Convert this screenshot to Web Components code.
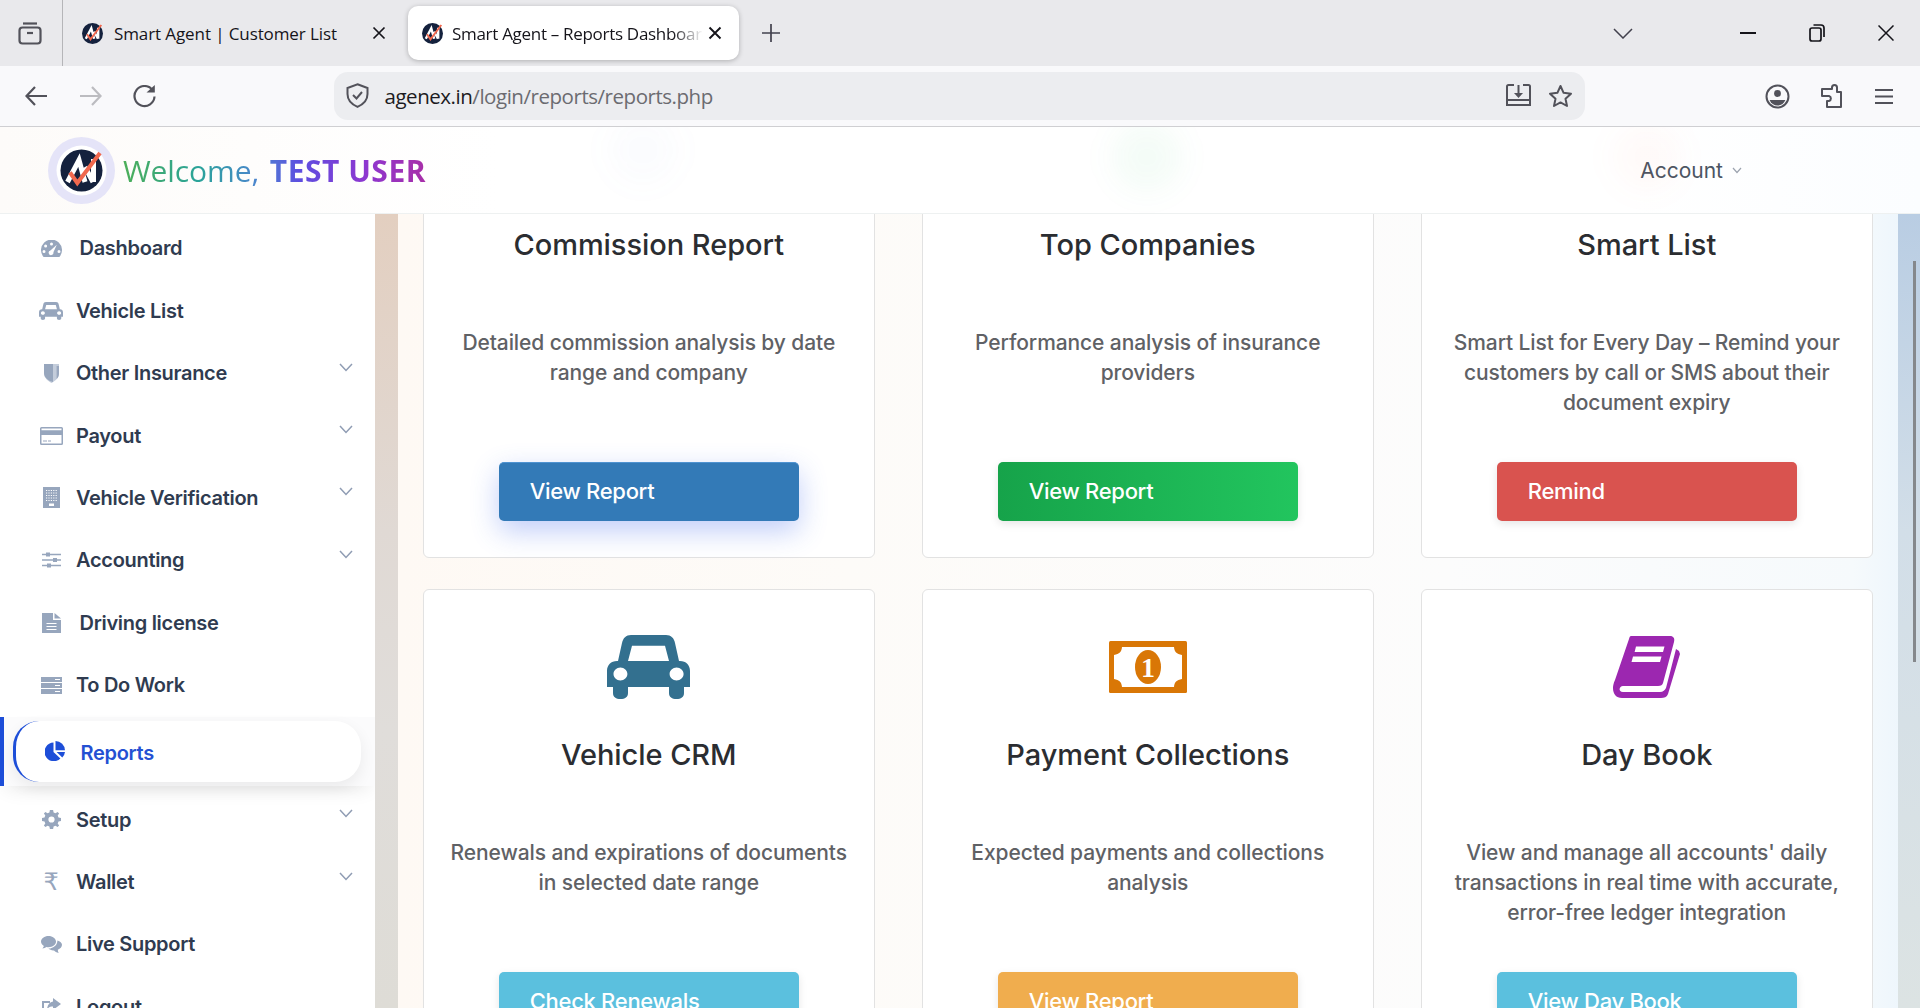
<!DOCTYPE html>
<html lang="en">
<head>
<meta charset="utf-8">
<title>Smart Agent – Reports Dashboard</title>
<style>
  html, body { margin: 0; height: 100%; overflow: hidden; background: #fff; }
  body { display: flex; flex-direction: column; font-family: Inter, "Liberation Sans", sans-serif; }
  .page { flex: 1; display: flex; min-height: 0; }
</style>
</head>
<body>
<browser-tabs></browser-tabs>
<browser-toolbar url-host="agenex.in" url-path="/login/reports/reports.php"></browser-toolbar>
<app-header>Welcome, <b>TEST USER</b></app-header>
<div class="page">
  <side-nav>
    <nav-item icon="gauge" indent>Dashboard</nav-item>
    <nav-item icon="car">Vehicle List</nav-item>
    <nav-item icon="shield" more>Other Insurance</nav-item>
    <nav-item icon="card" more>Payout</nav-item>
    <nav-item icon="building" more>Vehicle Verification</nav-item>
    <nav-item icon="sliders" more>Accounting</nav-item>
    <nav-item icon="file" indent>Driving license</nav-item>
    <nav-item icon="tasks">To Do Work</nav-item>
    <nav-item icon="pie" indent active>Reports</nav-item>
    <nav-item icon="cog" more>Setup</nav-item>
    <nav-item icon="rupee" more>Wallet</nav-item>
    <nav-item icon="chat">Live Support</nav-item>
    <nav-item icon="logout">Logout</nav-item>
  </side-nav>
  <reports-area>
    <report-card title="Commission Report" action="View Report" tone="primary">Detailed commission analysis by date<br>range and company</report-card>
    <report-card title="Top Companies" action="View Report" tone="success">Performance analysis of insurance<br>providers</report-card>
    <report-card title="Smart List" action="Remind" tone="danger">Smart List for Every Day – Remind your<br>customers by call or SMS about their<br>document expiry</report-card>
    <report-card title="Vehicle CRM" action="Check Renewals" tone="info" icon="crm">Renewals and expirations of documents<br>in selected date range</report-card>
    <report-card title="Payment Collections" action="View Report" tone="warning" icon="money">Expected payments and collections<br>analysis</report-card>
    <report-card title="Day Book" action="View Day Book" tone="info" icon="book">View and manage all accounts' daily<br>transactions in real time with accurate,<br>error-free ledger integration</report-card>
  </reports-area>
</div>

<script>
// car outline is used by the sidebar and by the big CRM card
const CAR_PATH = 'M24 0H59C64 0 67 3 68 8L72 26H73C79 26 83 30 83 36V52H77V58C77 62 74 64 69.5 64C65 64 62 62 62 58V52H21V58C21 62 18 64 13.5 64C9 64 6 62 6 58V52H0V36C0 30 4 26 10 26H11L15 8C16 3 19 0 24 0ZM25 10.7L21 26H62L58 10.7ZM13.4 32.5C9.5 32.5 6.5 35.5 6.5 39S9.5 45.5 13.4 45.5 20.4 42.5 20.4 39 17.3 32.5 13.4 32.5ZM69.6 32.5C65.7 32.5 62.6 35.5 62.6 39S65.7 45.5 69.6 45.5 76.6 42.5 76.6 39 73.5 32.5 69.6 32.5Z';

function logoMark(size, ring) {
  return `<svg width="${size}" height="${size}" viewBox="0 0 67 67">
    ${ring ? '<circle cx="33.5" cy="33.5" r="33.5" fill="#e5e4f8"/><circle cx="33.5" cy="33.5" r="25" fill="#fff"/>' : ''}
    <circle cx="33.5" cy="33.5" r="${ring ? 21 : 33.5}" fill="#14213d"/>
    <g transform="${ring ? '' : 'translate(-17.5 -18) scale(1.52)'}">
      <path d="M19.5 45L31 23L37 45M45.5 22V45M37 30L45 45" fill="none" stroke="#fff" stroke-width="5"/>
      <path d="M22 35.5L29.3 46L52 16" fill="none" stroke="#f0684e" stroke-width="4"/>
    </g>
  </svg>`;
}

const NAV_ICONS = {
  gauge: '<svg width="21" height="17" viewBox="0 0 21 17"><path fill-rule="evenodd" d="M2.6 17A10.5 10.5 0 1 1 18.4 17ZM10.5 2.4A1.5 1.5 0 1 0 10.5 5.4 1.5 1.5 0 0 0 10.5 2.4ZM4.6 4.6A1.5 1.5 0 1 0 4.6 7.6 1.5 1.5 0 0 0 4.6 4.6ZM3 10A1.5 1.5 0 1 0 3 13 1.5 1.5 0 0 0 3 10ZM18 10A1.5 1.5 0 1 0 18 13 1.5 1.5 0 0 0 18 10ZM15.8 4.8L9.4 10.4A2.4 2.4 0 1 0 12.4 12.2Z"/></svg>',
  car: `<svg width="24" height="18" viewBox="0 0 83 64" preserveAspectRatio="none"><path fill-rule="evenodd" d="${CAR_PATH}"/></svg>`,
  shield: '<svg width="15" height="19" viewBox="0 0 15 19"><path d="M0 0H15V9C15 14 11 17 7.5 19 4 17 0 14 0 9Z" fill="#c4cddb"/><path d="M0 0H9V18C5 17 0 14 0 9Z"/><path d="M12.6 2H15V9C15 12 14 14 12.6 15Z" fill="#9aa8bf"/></svg>',
  card: '<svg width="23" height="18" viewBox="0 0 23 18"><path fill-rule="evenodd" d="M1.5 0H21.5A1.5 1.5 0 0 1 23 1.5V16.5A1.5 1.5 0 0 1 21.5 18H1.5A1.5 1.5 0 0 1 0 16.5V1.5A1.5 1.5 0 0 1 1.5 0ZM1.5 8V16.5H21.5V8ZM1.5 1.5V3.2H21.5V1.5ZM3 13.5H7V14.5H3ZM8 13.5H11V14.5H8Z"/></svg>',
  building: `<svg width="17" height="21" viewBox="0 0 17 21"><path d="M0 0H17V21H0Z"/><path d="M3 3.5H14M3 6H14M3 8.5H14M3 11H14M3 13.5H14" stroke="#fff" stroke-width="1" stroke-dasharray="1.2 1.2"/><path d="M6 16.5H11V19H6Z" fill="#fff"/></svg>`,
  sliders: '<svg width="19" height="16" viewBox="0 0 19 16"><path d="M0 2.5H19M0 8H19M0 13.5H19" stroke-width="1.4" fill="none"/><path d="M4 0.5H8V4.5H4ZM11 6H15V10H11ZM5 11.5H9V15.5H5Z" stroke="none"/></svg>',
  file: '<svg width="19" height="20" viewBox="0 0 19 20"><path fill-rule="evenodd" d="M0 0H11V7H19V20H0ZM4.5 10V11H14.5V10ZM4.5 13V14H14.5V13ZM4.5 16V17H14.5V16Z"/><path d="M12.5 0L19 5.5H12.5Z"/></svg>',
  tasks: '<svg width="21" height="17" viewBox="0 0 21 17"><path fill-rule="evenodd" d="M0 0H21V5H0ZM0 6H21V11H0ZM0 12H21V17H0ZM14 2V3H19V2ZM14 8V9H19V8ZM14 14V15H19V14Z"/></svg>',
  pie: '<svg width="20" height="20" viewBox="0 0 20 20"><path d="M8.5 1.6V11L15.4 17.4A9.3 9.3 0 1 1 8.5 1.6Z"/><path d="M10.5 0A9.5 9.5 0 0 1 20 9.2H10.5Z"/><path d="M11.6 11H20A9.5 9.5 0 0 1 17.3 16.5Z"/></svg>',
  cog: '<svg width="19" height="19" viewBox="0 0 19 19"><path fill-rule="evenodd" d="M7.9 0H11.1L11.6 2.5 13.5 3.3 15.6 1.9 17.1 3.4 15.7 5.5 16.5 7.4 19 7.9V11.1L16.5 11.6 15.7 13.5 17.1 15.6 15.6 17.1 13.5 15.7 11.6 16.5 11.1 19H7.9L7.4 16.5 5.5 15.7 3.4 17.1 1.9 15.6 3.3 13.5 2.5 11.6 0 11.1V7.9L2.5 7.4 3.3 5.5 1.9 3.4 3.4 1.9 5.5 3.3 7.4 2.5ZM9.5 6.4A3.1 3.1 0 1 0 9.5 12.6 3.1 3.1 0 0 0 9.5 6.4Z"/></svg>',
  rupee: '<span class="glyph">₹</span>',
  chat: '<svg width="21" height="17" viewBox="0 0 21 17"><path d="M7.5 0C3.4 0 0 2.5 0 5.6 0 7.4 1.1 9 2.9 10 2.6 11 2 11.8 1.4 12.4 3 12.2 4.4 11.6 5.4 10.9 6.1 11.1 6.8 11.2 7.5 11.2 11.6 11.2 15 8.7 15 5.6S11.6 0 7.5 0Z"/><path d="M16.4 4.4C16.5 8.8 12.8 12.2 7.4 12.6 8.7 13.9 10.8 14.6 13 14.4 14 15.3 15.4 16.4 17.7 17 17.2 16 16.8 15 16.8 13.8 19.3 12.8 21 11 21 8.8 21 6.8 19.2 5.2 16.4 4.4Z"/></svg>',
  logout: '<svg width="19" height="18" viewBox="0 0 19 18"><path d="M0 3H8V5H2V16H13V12H15V18H0Z"/><path d="M11 0L19 6 11 12V8.5C8 8.5 6 9.5 5 12 5 7.5 7.5 4 11 3.5Z"/></svg>'
};

const CARD_ICONS = {
  crm: `<svg width="83" height="64" viewBox="0 0 83 64"><path fill="#33708f" fill-rule="evenodd" d="${CAR_PATH}"/></svg>`,
  money: `<svg width="78" height="52" viewBox="0 0 78 52">
    <rect width="78" height="52" rx="1.5" fill="#d97706"/>
    <path fill="#fff" d="M13 6H65C65.5 11 67.5 13 73 14V38C67.5 39 65.5 41 65 46H13C12.5 41 10.5 39 5 38V14C10.5 13 12.5 11 13 6Z"/>
    <ellipse cx="39" cy="26" rx="13" ry="17" fill="#d97706"/>
    <text x="39" y="36" text-anchor="middle" font-family="Liberation Serif, serif" font-weight="700" font-size="28" fill="#fff">1</text>
  </svg>`,
  book: `<svg width="67" height="62" viewBox="0 0 67 62"><path fill="#9c27b0" fill-rule="evenodd" d="M18 0H57C60.5 0 62 2.5 61 6L50 47C49.5 49 48 50 45 50H10C6 50 5 56 10 56H47C50 56 52 54 53 52L63 13L66 15 67 18 55 58C54 61 51 62 48 62H9C3 62 0 58 0 52 0 50 0.5 47 2 44L16 3C16.5 1 17 0 18 0ZM23 10.5L21.6 16H50L51.5 10.5ZM20 20.5L18.5 26H47L48.5 20.5Z"/></svg>`
};

class BrowserTabs extends HTMLElement {
  constructor() {
    super();
    this.attachShadow({ mode: 'open' });
  }

  connectedCallback() {
    this.shadowRoot.innerHTML = `
      <style>
        :host { display: flex; align-items: center; height: 66px; background: #e9e9ec; flex: none; color: #15141a;
          font-family: "Open Sans", "Liberation Sans", sans-serif; font-size: 17px; }
        .side { width: 63px; height: 100%; border-right: 1px solid #b5b5b8; display: flex; align-items: center; justify-content: center; box-sizing: border-box; padding-right: 3px; }
        .tab { display: flex; align-items: center; box-sizing: border-box; height: 54px; width: 344px; padding-left: 19px; }
        .tab .name { margin-left: 11px; white-space: nowrap; overflow: hidden; letter-spacing: -0.1px; }
        .tab svg.x { flex: none; margin-left: auto; }
        .tab.off { margin-right: 0; padding-right: 21px; }
        .tab.on { width: 331px; margin-left: 1px; background: #fff; border-radius: 10px; box-shadow: 0 1px 5px rgba(0,0,0,.25); padding-left: 14px; padding-right: 17px; }
        .tab.on .name { margin-left: 9px; width: 251px; letter-spacing: -0.3px; -webkit-mask-image: linear-gradient(90deg, #000 88%, transparent 100%); mask-image: linear-gradient(90deg, #000 88%, transparent 100%); }
        .plus { margin-left: 23px; }
        .right { margin-left: auto; display: flex; align-items: center; }
        .list { margin-right: 107px; }
        .win { margin-right: 53px; }
        .win:last-child { margin-right: 26px; }
      </style>
      <div class="side">
        <svg width="24" height="24" viewBox="0 0 24 24" fill="none" stroke="#52525a" stroke-width="2.2"><path d="M5 2.5H19"/><rect x="1.5" y="6.5" width="21" height="16" rx="3"/><path d="M9 12H15"/></svg>
      </div>
      <div class="tab off">
        ${logoMark(21)}
        <span class="name">Smart Agent | Customer List</span>
        <svg class="x" width="14" height="14" viewBox="0 0 14 14" stroke="#15141a" stroke-width="1.7"><path d="M1.5 1.5L12.5 12.5M12.5 1.5L1.5 12.5"/></svg>
      </div>
      <div class="tab on">
        ${logoMark(21)}
        <span class="name">Smart Agent – Reports Dashboard</span>
        <svg class="x" width="14" height="14" viewBox="0 0 14 14" stroke="#15141a" stroke-width="1.9"><path d="M1.5 1.5L12.5 12.5M12.5 1.5L1.5 12.5"/></svg>
      </div>
      <svg class="plus" width="18" height="18" viewBox="0 0 18 18" stroke="#42414d" stroke-width="1.7"><path d="M9 0V18M0 9H18"/></svg>
      <div class="right">
        <svg class="list" width="20" height="11" viewBox="0 0 20 11" fill="none" stroke="#42414d" stroke-width="1.5"><path d="M1 1L10 10 19 1"/></svg>
        <svg class="win" width="16" height="2" viewBox="0 0 16 2"><path d="M0 0H16V2H0Z" fill="#15141a"/></svg>
        <svg class="win" width="16" height="18" viewBox="0 0 16 18" fill="none" stroke="#15141a" stroke-width="1.7"><rect x="1" y="4" width="11" height="13" rx="2"/><path d="M4.5 1H12C13.7 1 15 2.3 15 4V13"/></svg>
        <svg class="win" width="16" height="16" viewBox="0 0 16 16" stroke="#15141a" stroke-width="1.5"><path d="M0.5 0.5L15.5 15.5M15.5 0.5L0.5 15.5"/></svg>
      </div>
    `;
  }
}

class BrowserToolbar extends HTMLElement {
  constructor() {
    super();
    this.attachShadow({ mode: 'open' });
  }

  connectedCallback() {
    this.shadowRoot.innerHTML = `
      <style>
        :host { display: flex; align-items: center; flex: none; height: 61px; box-sizing: border-box; background: #f9f9fb; border-bottom: 1.5px solid #cfcfd2;
          font-family: "Open Sans", "Liberation Sans", sans-serif; }
        .nav { display: flex; align-items: center; gap: 31px; padding-left: 25px; width: 334px; box-sizing: border-box; }
        .bar { width: 1251px; height: 48px; background: #ecedf0; border-radius: 14px; display: flex; align-items: center; padding: 0 12px 0 12px; box-sizing: border-box; margin-bottom: 1px; }
        .url { margin-left: 15.5px; padding-top: 1px; font-size: 20.5px; color: #6b6b70; letter-spacing: -0.46px; white-space: nowrap; }
        .url b { font-weight: 400; color: #1c1b22; }
        .tail { margin-left: auto; display: flex; align-items: center; gap: 17px; }
        .tools { margin-left: auto; display: flex; align-items: center; padding-right: 26px; }
        .account { margin-right: 30.5px; }
        .puzzle { margin-right: 32px; }
      </style>
      <div class="nav">
        <svg width="23" height="20" viewBox="0 0 23 20" fill="none" stroke="#52525a" stroke-width="2.2"><path d="M22 10H2M10 1L1.5 10 10 19"/></svg>
        <svg width="23" height="20" viewBox="0 0 23 20" fill="none" stroke="#bcbcc0" stroke-width="2.2"><path d="M1 10H21M13 1L21.5 10 13 19"/></svg>
        <svg width="23" height="23" viewBox="0 0 23 23" fill="none" stroke="#52525a" stroke-width="2.2"><path d="M19.5 5A10 10 0 1 0 21.5 11.5"/><path d="M13.5 7.5H21.8V0Z" fill="#52525a" stroke="none"/></svg>
      </div>
      <div class="bar">
        <svg width="23" height="25" viewBox="0 0 23 25" fill="none" stroke="#52525a" stroke-width="2"><path d="M11.5 1.2L21.5 5V11C21.5 17 17 21.5 11.5 23.8 6 21.5 1.5 17 1.5 11V5Z"/><path d="M7 12L10.5 15.5 16 9"/></svg>
        <span class="url"><b>${this.getAttribute('url-host')}</b>${this.getAttribute('url-path')}</span>
        <div class="tail">
          <svg width="25" height="23" viewBox="0 0 25 23" fill="none" stroke="#52525a" stroke-width="2"><path d="M8 1H2.5A1.5 1.5 0 0 0 1 2.5V21H24V2.5A1.5 1.5 0 0 0 22.5 1H17"/><path d="M1 16H24"/><path d="M12.5 1V11"/><path d="M8 9H17L12.5 14Z" fill="#52525a" stroke="none"/></svg>
          <svg width="25" height="24" viewBox="0 0 25 24" fill="none" stroke="#52525a" stroke-width="2"><path d="M12.5 2L15.6 8.8 23 9.7 17.5 14.7 19 22 12.5 18.4 6 22 7.5 14.7 2 9.7 9.4 8.8Z" stroke-linejoin="round"/></svg>
        </div>
      </div>
      <div class="tools">
        <svg class="account" width="25" height="25" viewBox="0 0 25 25" fill="none" stroke="#52525a" stroke-width="2"><circle cx="12.5" cy="12.5" r="11"/><circle cx="12.5" cy="9.5" r="3.4" fill="#52525a" stroke="none"/><path d="M4.6 16H20.4C19 19.6 16 21.5 12.5 21.5S6 19.6 4.6 16Z" fill="#52525a" stroke="none"/></svg>
        <svg class="puzzle" width="22" height="24" viewBox="0 0 22 24" fill="none" stroke="#52525a" stroke-width="2"><path d="M9 5H12V3.5A2.5 2.5 0 0 1 17 3.5V8H21V23H7V17H9A2.6 2.6 0 0 0 9 12H2V5Z" stroke-linejoin="round"/></svg>
        <svg width="20" height="17" viewBox="0 0 20 17" stroke="#52525a" stroke-width="2"><path d="M1 2H19M1 8.5H19M1 15H19"/></svg>
      </div>
    `;
  }
}

class AppHeader extends HTMLElement {
  constructor() {
    super();
    this.attachShadow({ mode: 'open' });
  }

  connectedCallback() {
    this.shadowRoot.innerHTML = `
      <style>
        :host { display: flex; align-items: center; flex: none; height: 87px; box-sizing: border-box; padding: 0 0 0 48px; position: relative; overflow: hidden;
          background: linear-gradient(90deg, #fdfbf9, #fff 26%, #fff 85%, #fbfdff); border-bottom: 1px solid #eef1f1; }
        .greet { margin-left: 8px; padding-top: 1px; font: 500 30px "Open Sans", "Liberation Sans", sans-serif; letter-spacing: -0.1px;
          background: linear-gradient(90deg, #4cae58 0%, #2aa39a 25%, #4d84d0 45%, #5d4fe0 58%, #8d37d0 80%, #a82fa8 100%);
          -webkit-background-clip: text; background-clip: text; color: transparent; }
        ::slotted(b) { font-weight: 700; letter-spacing: 0.5px; margin-left: 3px; }
        .account { margin-left: auto; margin-right: 178px; padding-top: 1px; display: flex; align-items: center; gap: 9px; font: 400 21px Inter, "Liberation Sans", sans-serif; color: #4b5563; }
        /* card icons scrolled under the translucent header */
        .glow { position: absolute; width: 70px; height: 70px; border-radius: 50%; filter: blur(14px); }
      </style>
      <div class="glow" style="left:608px;top:-12px;background:rgba(70,120,230,.025)"></div>
      <div class="glow" style="left:1112px;top:-5px;background:rgba(30,190,90,.05)"></div>
      <div class="glow" style="left:1612px;top:-5px;background:rgba(240,80,70,.03)"></div>
      ${logoMark(67, true)}
      <span class="greet"><slot></slot></span>
      <div class="account">Account
        <svg width="10" height="7" viewBox="0 0 10 7" fill="none" stroke="#9ca3af" stroke-width="1.2"><path d="M1 1L5 5.5 9 1"/></svg>
      </div>
    `;
  }
}

class SideNav extends HTMLElement {
  constructor() {
    super();
    this.attachShadow({ mode: 'open' });
  }

  connectedCallback() {
    this.shadowRoot.innerHTML = `
      <style>
        :host { display: flex; flex-direction: column; flex: none; width: 375px; padding-top: 3.2px; box-sizing: border-box; background: #fff; overflow: hidden; }
      </style>
      <slot></slot>
    `;
  }
}

class NavItem extends HTMLElement {
  constructor() {
    super();
    this.attachShadow({ mode: 'open' });
  }

  connectedCallback() {
    const icon = NAV_ICONS[this.getAttribute('icon')];
    const more = this.hasAttribute('more') ? '<svg class="more" width="14" height="9" viewBox="0 0 14 9" fill="none" stroke="#8f9cb3" stroke-width="1.5"><path d="M1 1L7 7.5 13 1"/></svg>' : '';
    this.shadowRoot.innerHTML = `
      <style>
        :host { display: block; flex: none; height: 62.4px; color: #2f3b50; font: 600 20px/1 Inter, "Liberation Sans", sans-serif; letter-spacing: -0.3px; }
        .row { display: flex; align-items: center; height: 100%; box-sizing: border-box; padding: 0 22px 0 38px; }
        .icon { flex: none; width: 26px; margin-right: 12px; display: flex; justify-content: center; fill: #97a6bd; stroke: #97a6bd; }
        .icon svg { stroke: none; display: block; }
        .icon svg[viewBox="0 0 19 16"] path:first-child { stroke: #97a6bd; }
        .glyph { font: 400 24px/1 "DejaVu Sans", sans-serif; color: #97a6bd; }
        .more { margin: -12px 0 0 auto; flex: none; }
        :host([indent]) .icon { margin-right: 15.5px; }
        :host([active]) { height: 69px; margin: 0.5px 0 2.7px; background: #fbfbfc; border-left: 4px solid #1d4ed8; color: #2450d3; box-sizing: border-box; box-shadow: 0 9px 18px -6px rgba(0,0,0,.09); position: relative; }
        :host([active]) .row { height: 61px; margin: 4px 14px 0 9px; padding: 3px 0 0 29px; background: #fff; border-left: 3px solid #1d4ed8; border-radius: 26px; box-shadow: 0 6px 16px rgba(0,0,0,.07); }
        :host([active]) .icon { fill: #1d4ed8; width: 20px; margin-right: 15.5px; margin-left: 0; margin-top: -3px; }
      </style>
      <div class="row">
        <span class="icon">${icon}</span>
        <slot></slot>
        ${more}
      </div>
    `;
  }
}

class ReportsArea extends HTMLElement {
  constructor() {
    super();
    this.attachShadow({ mode: 'open' });
  }

  connectedCallback() {
    this.shadowRoot.innerHTML = `
      <style>
        :host { display: flex; flex: 1; min-width: 0; overflow: hidden; }
        .edge { flex: none; width: 23px; background: linear-gradient(180deg, #e3cfc0 0%, #e0d9d4 40%, #e0ddda 65%, #dedcd6 100%); }
        .scroll { flex: 1; min-width: 0; padding: 0 25px 0 24.5px; overflow: hidden; background: linear-gradient(90deg, #fef9f4 0%, #fdfbf8 30%, #fcfcfc 70%, #f6fafc 97%, #eef6fc 100%); }
        /* list is scrolled 135px down, as in the photographed state */
        .grid { display: grid; grid-template-columns: repeat(3, 1fr); column-gap: 46.5px; row-gap: 31px; margin-top: -135px; }
        .track { flex: none; width: 22px; box-sizing: border-box; padding: 47px 4px 0 15px; background: linear-gradient(180deg, #b9cde3 0%, #d2dee8 40%, #dce3e3 100%); }
        .thumb { height: 401px; background: #85888c; }
      </style>
      <div class="edge"></div>
      <div class="scroll"><div class="grid"><slot></slot></div></div>
      <div class="track"><div class="thumb"></div></div>
    `;
  }
}

class ReportCard extends HTMLElement {
  constructor() {
    super();
    this.attachShadow({ mode: 'open' });
  }

  connectedCallback() {
    const icon = CARD_ICONS[this.getAttribute('icon')] || '';
    this.shadowRoot.innerHTML = `
      <style>
        :host { display: flex; flex-direction: column; align-items: center; box-sizing: border-box; height: 479px; padding: 45px 0 0; background: #fff; border: 1px solid #e2e2e2; border-radius: 6px; font-family: Inter, "Liberation Sans", sans-serif; }
        .icon { height: 64px; display: flex; align-items: center; justify-content: center; }
        h2 { margin: 37.5px 0 0; height: 36px; font: 500 29px/36px Inter, "Liberation Sans", sans-serif; letter-spacing: -0.05px; color: #2b2d31; white-space: nowrap; }
        p { margin: 65.5px 0 0; height: 90px; font: 500 21px/30px Inter, "Liberation Sans", sans-serif; letter-spacing: -0.1px; color: #5f6165; text-align: center; white-space: nowrap; }
        a { display: block; margin-top: 44px; width: 300px; height: 59px; box-sizing: border-box; padding-left: 31px; font: 500 22px/58px Inter, "Liberation Sans", sans-serif; letter-spacing: -0.3px; color: #fff; border-radius: 5px; text-decoration: none; box-shadow: 0 3px 8px rgba(0,0,0,.1); }
        :host([tone=primary]) a { background: #337ab7; border-top: 1px solid #4f93d1; line-height: 57px; box-shadow: 0 10px 28px rgba(60,100,235,.32); }
        :host([tone=success]) a { background: linear-gradient(90deg, #16a34a, #22c55e); }
        :host([tone=danger]) a { background: #d9534f; }
        :host([tone=info]) a { background: #5bc0de; }
        :host([tone=warning]) a { background: #f0ad4e; }
      </style>
      <div class="icon">${icon}</div>
      <h2>${this.getAttribute('title')}</h2>
      <p><slot></slot></p>
      <a href="#">${this.getAttribute('action')}</a>
    `;
  }
}

customElements.define('browser-tabs', BrowserTabs);
customElements.define('browser-toolbar', BrowserToolbar);
customElements.define('app-header', AppHeader);
customElements.define('side-nav', SideNav);
customElements.define('nav-item', NavItem);
customElements.define('reports-area', ReportsArea);
customElements.define('report-card', ReportCard);
</script>
</body>
</html>
